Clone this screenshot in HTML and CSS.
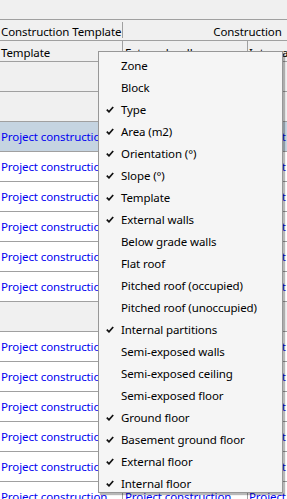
FILE: index.html
```html
<!DOCTYPE html>
<html>
<head>
<meta charset="utf-8">
<link rel="stylesheet" href="styles.css">
</head>
<body>
<div class="grid">
  <div class="groupbar"></div>
  <div class="hdr hdr1">
    <div class="hc c1"><span>Construction Template</span></div>
    <div class="hc span23 center"><span>Construction</span></div>
  </div>
  <div class="hdr hdr2">
    <div class="hc c1"><span>Template</span></div>
    <div class="hc c2"><span>External walls</span></div>
    <div class="hc c3"><span>Internal partitions</span></div>
  </div>
  <div class="row gray"><div class="cell c1"></div><div class="cell c2"></div><div class="cell c3"></div></div>
  <div class="row gray"><div class="cell c1"></div><div class="cell c2"></div><div class="cell c3"></div></div>
  <div class="row sel"><div class="cell c1">Project construction</div><div class="cell c2">Project construction</div><div class="cell c3">Project construction</div></div>
  <div class="row"><div class="cell c1">Project construction</div><div class="cell c2">Project construction</div><div class="cell c3">Project construction</div></div>
  <div class="row"><div class="cell c1">Project construction</div><div class="cell c2">Project construction</div><div class="cell c3">Project construction</div></div>
  <div class="row"><div class="cell c1">Project construction</div><div class="cell c2">Project construction</div><div class="cell c3">Project construction</div></div>
  <div class="row"><div class="cell c1">Project construction</div><div class="cell c2">Project construction</div><div class="cell c3">Project construction</div></div>
  <div class="row"><div class="cell c1">Project construction</div><div class="cell c2">Project construction</div><div class="cell c3">Project construction</div></div>
  <div class="row gray"><div class="cell c1"></div><div class="cell c2"></div><div class="cell c3"></div></div>
  <div class="row"><div class="cell c1">Project construction</div><div class="cell c2">Project construction</div><div class="cell c3">Project construction</div></div>
  <div class="row"><div class="cell c1">Project construction</div><div class="cell c2">Project construction</div><div class="cell c3">Project construction</div></div>
  <div class="row"><div class="cell c1">Project construction</div><div class="cell c2">Project construction</div><div class="cell c3">Project construction</div></div>
  <div class="row"><div class="cell c1">Project construction</div><div class="cell c2">Project construction</div><div class="cell c3">Project construction</div></div>
  <div class="row"><div class="cell c1">Project construction</div><div class="cell c2">Project construction</div><div class="cell c3">Project construction</div></div>
  <div class="row"><div class="cell c1">Project construction</div><div class="cell c2">Project construction</div><div class="cell c3">Project construction</div></div>
</div>

<div class="menu">
  <div class="item"><span class="chk"></span>Zone</div>
  <div class="item"><span class="chk"></span>Block</div>
  <div class="item on"><span class="chk"><svg viewBox="0 0 8 7" width="8" height="7"><path d="M0.8 3.6 L3 5.8 L7.2 1" /></svg></span>Type</div>
  <div class="item on"><span class="chk"><svg viewBox="0 0 8 7" width="8" height="7"><path d="M0.8 3.6 L3 5.8 L7.2 1" /></svg></span>Area (m2)</div>
  <div class="item on"><span class="chk"><svg viewBox="0 0 8 7" width="8" height="7"><path d="M0.8 3.6 L3 5.8 L7.2 1" /></svg></span>Orientation (°)</div>
  <div class="item on"><span class="chk"><svg viewBox="0 0 8 7" width="8" height="7"><path d="M0.8 3.6 L3 5.8 L7.2 1" /></svg></span>Slope (°)</div>
  <div class="item on"><span class="chk"><svg viewBox="0 0 8 7" width="8" height="7"><path d="M0.8 3.6 L3 5.8 L7.2 1" /></svg></span>Template</div>
  <div class="item on"><span class="chk"><svg viewBox="0 0 8 7" width="8" height="7"><path d="M0.8 3.6 L3 5.8 L7.2 1" /></svg></span>External walls</div>
  <div class="item"><span class="chk"></span>Below grade walls</div>
  <div class="item"><span class="chk"></span>Flat roof</div>
  <div class="item"><span class="chk"></span>Pitched roof (occupied)</div>
  <div class="item"><span class="chk"></span>Pitched roof (unoccupied)</div>
  <div class="item on"><span class="chk"><svg viewBox="0 0 8 7" width="8" height="7"><path d="M0.8 3.6 L3 5.8 L7.2 1" /></svg></span>Internal partitions</div>
  <div class="item"><span class="chk"></span>Semi-exposed walls</div>
  <div class="item"><span class="chk"></span>Semi-exposed ceiling</div>
  <div class="item"><span class="chk"></span>Semi-exposed floor</div>
  <div class="item on"><span class="chk"><svg viewBox="0 0 8 7" width="8" height="7"><path d="M0.8 3.6 L3 5.8 L7.2 1" /></svg></span>Ground floor</div>
  <div class="item on"><span class="chk"><svg viewBox="0 0 8 7" width="8" height="7"><path d="M0.8 3.6 L3 5.8 L7.2 1" /></svg></span>Basement ground floor</div>
  <div class="item on"><span class="chk"><svg viewBox="0 0 8 7" width="8" height="7"><path d="M0.8 3.6 L3 5.8 L7.2 1" /></svg></span>External floor</div>
  <div class="item on"><span class="chk"><svg viewBox="0 0 8 7" width="8" height="7"><path d="M0.8 3.6 L3 5.8 L7.2 1" /></svg></span>Internal floor</div>
</div>
</body>
</html>
```

FILE: styles.css
```css
html, body {
  margin: 0;
  padding: 0;
  background: #f0f0f0;
  overflow: hidden;
}
body {
  width: 287px;
  height: 499px;
  position: relative;
  font-family: "Noto Sans", "Open Sans", sans-serif;
  font-size: 11.5px;
  letter-spacing: -0.1px;
  color: #000;
}
.grid {
  width: 400px;
}
.groupbar {
  height: 19px;
  border-bottom: 1px solid #a0a0a0;
}
.hdr {
  display: grid;
  grid-template-columns: 123px 125px 152px;
  height: 20px;
  border-bottom: 1px solid #a0a0a0;
}
.hc {
  display: flex;
  align-items: center;
  white-space: nowrap;
  overflow: hidden;
  position: relative;
  padding-top: 2px;
  box-sizing: border-box;
}
.hdr1 .c1 { padding-left: 1px; }
.hdr1 .c1::after {
  content: "";
  position: absolute;
  right: 0;
  top: 2px;
  bottom: 2px;
  width: 1px;
  background: #a0a0a0;
}
.span23 { grid-column: 2 / 4; }
.hdr1 .span23 {
  display: grid;
  grid-template-columns: 249px;
  justify-content: start;
  align-items: center;
}
.hdr1 .span23 span { text-align: center; }
.hdr2 .hc { border-right: 1px solid #a0a0a0; }
.hdr2 .c1 { padding-left: 1px; }
.hdr2 .c2 { padding-left: 2px; }
.hdr2 .c3 { padding-left: 1px; }
.row {
  display: grid;
  grid-template-columns: 123px 125px 152px;
  height: 29px;
  border-bottom: 1px solid #a0a0a0;
  background: #fff;
}
.row.gray { background: #f0f0f0; }
.row.sel { background: #c5d4e1; }
.cell {
  display: flex;
  align-items: center;
  white-space: nowrap;
  overflow: hidden;
  color: #0000f0;
  border-right: 1px solid #a0a0a0;
}
.cell.c1 { padding-left: 1px; }
.cell.c2 { padding-left: 2px; }
.cell.c3 { padding-left: 1px; }

.menu {
  position: absolute;
  left: 98px;
  top: 51px;
  width: 183px;
  border: 1px solid #979797;
  background: #f5f5f5;
  box-shadow: 2px 2px 1px rgba(0, 0, 0, 0.28);
}
.item {
  height: 22px;
  box-sizing: border-box;
  padding-top: 4px;
  display: flex;
  align-items: center;
  white-space: nowrap;
  color: #000;
}
.chk {
  width: 22px;
  display: flex;
  justify-content: center;
  align-items: center;
}
.chk svg {
  display: block;
  fill: none;
  stroke: #111;
  stroke-width: 1.7;
}
```
